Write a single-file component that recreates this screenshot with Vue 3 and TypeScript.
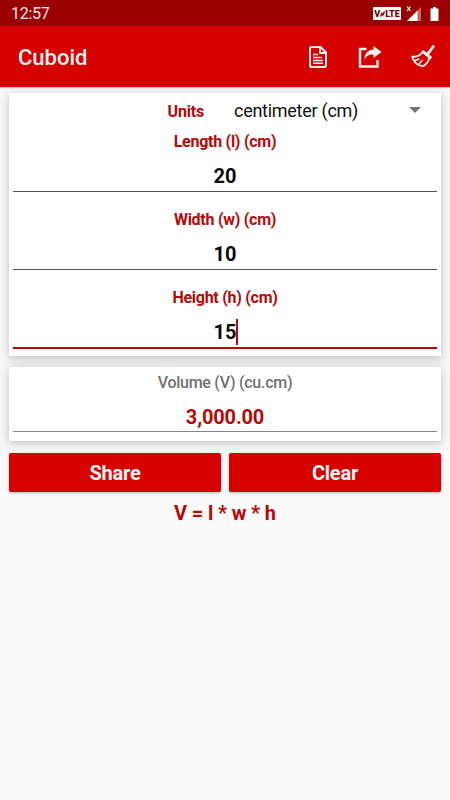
<script setup lang="ts">
import { computed, ref } from 'vue'

interface Field {
  label: string
  value: string
}

const unit = ref('centimeter (cm)')
const fields = ref<Field[]>([
  { label: 'Length (l) (cm)', value: '20' },
  { label: 'Width (w) (cm)', value: '10' },
  { label: 'Height (h) (cm)', value: '15' },
])
const active = ref(2)

const volume = computed(() => {
  if (fields.value.some((f) => f.value === '')) return ''
  return fields.value
    .reduce((product, f) => product * Number(f.value), 1)
    .toLocaleString('en-US', { minimumFractionDigits: 2, maximumFractionDigits: 2 })
})

function clearAll() {
  fields.value.forEach((f) => (f.value = ''))
  active.value = 0
}
</script>

<template>
  <div class="screen">
    <div class="status">
      <span class="time">12:57</span>
      <div class="indicators">
        <span class="volte">V<svg class="wave" viewBox="0 0 5 8"><path d="M0.5 6.5 2 3.5 3 5 4.5 1.5" fill="none" stroke="#9b0000" stroke-width="1.4" /></svg>LTE</span>
        <svg class="signal" width="16" height="18" viewBox="0 0 16 18">
          <path d="M1 1.500l3.500 4.500M4.500 1.500l-3.500 4.500" stroke="#fff" stroke-width="1.200" fill="none" />
          <path d="M15 2v14H1z" fill="#fff" opacity=".4" />
          <path d="M11.500 5.500V16H1z" fill="#fff" />
        </svg>
        <svg class="battery" width="9" height="14" viewBox="0 0 9 14">
          <path d="M3 0h3v1.500h2.500V14H.5V1.500H3z" fill="#fff" />
        </svg>
      </div>
    </div>

    <header class="appbar">
      <h1>Cuboid</h1>
      <nav>
        <svg width="18" height="22" viewBox="0 0 18 22" fill="none" stroke="#ffeeee">
          <path d="M3 1h8.500l5.500 5.500V19.200q0 1.800-1.800 1.800H3q-2 0-2-1.800V2.800Q1 1 3 1z" stroke-width="2" />
          <path d="M11 1v6h6" stroke-width="1.800" />
          <path d="M4 8.500h5M4 11.500h9M4 14.500h10M4 17.300h10" stroke-width="1.500" />
        </svg>
        <svg width="24" height="22" viewBox="0 0 24 22">
          <path d="M8.500 3H2v17.500h17.500V14" fill="none" stroke="#ffeeee" stroke-width="2.400" />
          <path d="M15.500 0 23.500 6l-8 6V8.500C11 8 9 9.500 6.500 13.500 6.500 7.500 10 3.800 15.500 3.500z" fill="#ffeeee" />
        </svg>
        <svg width="24" height="23" viewBox="0 0 24 23" fill="none" stroke="#ffeeee" stroke-linecap="round" stroke-linejoin="round">
          <path d="M22.300 1.500 17.300 8.200" stroke-width="2.800" />
          <path d="M12 6.800 19.200 12.300" stroke-width="3" />
          <path d="M10.500 8.300C8 11 5 12 1.200 11.700 2.500 16.500 6 20.500 12.200 21.200 15.500 19 17.800 16.500 18 13.500" stroke-width="1.800" />
          <path d="M4 15.500 8 14M8 19l3-3.500" stroke-width="1.500" />
        </svg>
      </nav>
    </header>

    <main>
      <section class="card inputs">
        <div class="units">
          <span class="units-label">Units</span>
          <div class="select">
            <span class="unit">{{ unit }}</span>
            <svg width="12" height="6" viewBox="0 0 12 6"><path d="M0 0h12L6 6z" fill="#737373" /></svg>
          </div>
        </div>
        <div
          v-for="(field, i) in fields"
          :key="field.label"
          class="field"
          :class="{ focused: i === active }"
          @click="active = i"
        >
          <div class="label">{{ field.label }}</div>
          <div class="value"><span class="entry">{{ field.value }}<i v-if="i === active" class="caret"></i></span></div>
        </div>
      </section>

      <section class="card result">
        <div class="label">Volume (V) (cu.cm)</div>
        <div class="value"><span>{{ volume }}</span></div>
      </section>

      <div class="actions">
        <button type="button">Share</button>
        <button type="button" @click="clearAll">Clear</button>
      </div>
      <div class="formula">V = l * w * h</div>
    </main>
  </div>
</template>

<style>
body {
  margin: 0;
  background: #fafafa;
}
</style>

<style scoped>
.screen {
  width: 450px;
  height: 800px;
  overflow: hidden;
  background: #fafafa;
  font-family: Roboto, "Liberation Sans", sans-serif;
  box-sizing: border-box;
}
.status {
  height: 26px;
  background: #9b0000;
  color: #fff;
  display: flex;
  align-items: center;
  justify-content: space-between;
  padding: 0 11px 0 11px;
}
.time {
  font-size: 16px;
  line-height: 26px;
  padding-top: 2px;
  letter-spacing: -0.3px;
  color: #ffe9e9;
}
.indicators {
  display: flex;
  align-items: center;
  padding-top: 1px;
}
.volte {
  display: flex;
  align-items: center;
  justify-content: center;
  width: 28px;
  height: 13px;
  background: #fff;
  color: #700000;
  font-size: 9px;
  font-weight: 900;
  border-radius: 1px;
}
.wave {
  width: 5px;
  height: 8px;
}
.signal {
  margin: 0 8px 0 5px;
}
.appbar {
  position: relative;
  z-index: 1;
  height: 61px;
  background: #d50000;
  box-shadow: 0 1px 1px rgba(213, 0, 0, 0.25);
  display: flex;
  align-items: center;
  justify-content: space-between;
  padding: 0 15px 0 18px;
  box-sizing: border-box;
}
h1 {
  margin: 3px 0 0;
  color: #fff2f2;
  font-size: 22px;
  font-weight: 500;
  line-height: 28px;
}
nav {
  display: flex;
  align-items: center;
}
nav svg + svg {
  margin-left: 31px;
}
nav svg:last-child {
  margin-left: 29px;
}
main {
  padding: 6px 9px 0;
}
.card {
  background: #fff;
  padding: 0 4px;
  box-sizing: border-box;
  box-shadow: 0 2px 5px rgba(0, 0, 0, 0.1), 0 2px 14px 2px rgba(0, 0, 0, 0.12);
}
.inputs {
  height: 263px;
}
.units {
  height: 36px;
  display: flex;
  align-items: center;
  box-sizing: border-box;
}
.units-label {
  width: 191px;
  text-align: right;
  color: #b80808;
  font-size: 16px;
  font-weight: 700;
  letter-spacing: -0.2px;
}
.select {
  flex: 1;
  display: flex;
  align-items: center;
  justify-content: space-between;
  padding: 0 16px 2px 30px;
}
.unit {
  font-size: 18px;
  letter-spacing: -0.27px;
  color: #111;
}
.field {
  height: 78px;
}
.label {
  height: 24px;
  text-align: center;
  font-size: 16px;
  font-weight: 700;
  line-height: 26px;
  letter-spacing: -0.27px;
  color: #b80808;
}
.value {
  height: 38px;
  display: flex;
  justify-content: center;
  border-bottom: 1px solid #505050;
  font-size: 20px;
  font-weight: 700;
  line-height: 47px;
  color: #0a0a0a;
}
.focused .value {
  border-bottom: 2px solid #b80808;
}
.entry {
  position: relative;
}
.caret {
  position: absolute;
  left: 100%;
  top: 10px;
  width: 2px;
  height: 26px;
  background: #b80808;
}
.result {
  position: relative;
  margin-top: 11px;
  height: 74px;
  padding-top: 3px;
}
.inputs {
  position: relative;
}
.result .label {
  color: #707070;
  font-weight: 500;
}
.result .value {
  height: 37px;
  color: #b80808;
  border-bottom-color: #858585;
  letter-spacing: -0.15px;
}
.actions {
  position: relative;
  margin-top: 12px;
  display: grid;
  grid-template-columns: 1fr 1fr;
  gap: 8px;
}
button {
  height: 39px;
  border: 0;
  border-radius: 2px;
  padding: 0;
  background: #d50000;
  color: #fff5f5;
  font-family: inherit;
  font-size: 20px;
  font-weight: 700;
  letter-spacing: -0.2px;
  box-shadow: 0 1px 3px rgba(0, 0, 0, 0.3);
}
.formula {
  margin-top: 9px;
  text-align: center;
  color: #b80808;
  font-size: 20px;
  font-weight: 700;
  line-height: 24px;
  letter-spacing: -0.15px;
}
</style>
